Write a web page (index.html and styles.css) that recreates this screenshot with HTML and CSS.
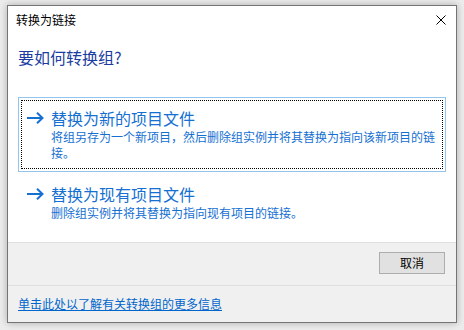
FILE: index.html
```html
<!DOCTYPE html>
<html lang="zh-CN">
<head>
<meta charset="utf-8">
<title>转换为链接</title>
<link rel="stylesheet" href="styles.css">
</head>
<body>
<div class="window">
  <div class="titlebar">
    <span class="title">转换为链接</span>
    <svg class="close" width="10" height="10" viewBox="0 0 10 10"><path d="M0.5 0.5L9.5 9.5M9.5 0.5L0.5 9.5" stroke="#000" stroke-width="1" fill="none"/></svg>
  </div>
  <div class="content">
    <div class="heading">要如何转换组?</div>
    <div class="cmd focused">
      <div class="arrow"><svg width="17" height="12" viewBox="0 0 17 12"><path d="M0 6H15.5M10 0.7L15.5 6L10 11.3" stroke="#1570d2" stroke-width="2" fill="none"/></svg></div>
      <div class="cmd-text">
        <div class="cmd-title">替换为新的项目文件</div>
        <div class="cmd-desc">将组另存为一个新项目，然后删除组实例并将其替换为指向该新项目的链接。</div>
      </div>
    </div>
    <div class="cmd">
      <div class="arrow"><svg width="17" height="12" viewBox="0 0 17 12"><path d="M0 6H15.5M10 0.7L15.5 6L10 11.3" stroke="#1570d2" stroke-width="2" fill="none"/></svg></div>
      <div class="cmd-text">
        <div class="cmd-title">替换为现有项目文件</div>
        <div class="cmd-desc">删除组实例并将其替换为指向现有项目的链接。</div>
      </div>
    </div>
  </div>
  <div class="footer">
    <button class="btn">取消</button>
  </div>
  <div class="bottombar">
    <a class="more" href="#">单击此处以了解有关转换组的更多信息</a>
  </div>
</div>
</body>
</html>
```
FILE: styles.css
```css
html, body {
  margin: 0;
  padding: 0;
}
body {
  background: #ececec;
  font-family: "Noto Sans CJK SC", "Noto Sans", sans-serif;
  width: 464px;
  height: 330px;
  overflow: hidden;
}
.window {
  box-sizing: border-box;
  width: 450px;
  height: 318px;
  margin: 5px 0 0 7px;
  border: 1px solid #757575;
  background: #ffffff;
  box-shadow: 0 0 7px rgba(0, 0, 0, 0.28);
  display: flex;
  flex-direction: column;
}
.titlebar {
  height: 27px;
  display: flex;
  align-items: center;
  justify-content: space-between;
  padding: 0 10px 0 8px;
  font-size: 12px;
  line-height: 16px;
  color: #000;
}
.close {
  display: block;
  margin-top: 1px;
}
.content {
  padding: 0 10px 10px 10px;
}
.heading {
  margin-top: 13px;
  font-size: 16px;
  line-height: 22px;
  color: #1b3ca0;
}
.cmd {
  position: relative;
  margin-top: 1px;
  display: flex;
  align-items: flex-start;
  padding: 9px 8px 10px 8px;
  border: 1px solid transparent;
}
.cmd.focused {
  margin-top: 29px;
  border-color: #92c4ee;
}
.cmd.focused::after {
  content: "";
  position: absolute;
  left: 2px;
  top: 2px;
  right: 2px;
  bottom: 2px;
  border: 1px dotted #000;
}
.arrow {
  width: 17px;
  height: 22px;
  display: flex;
  align-items: center;
  margin-right: 7px;
  flex: none;
}
.arrow svg {
  display: block;
}
.cmd-text {
  flex: 1;
  min-width: 0;
}
.cmd-title {
  font-size: 16px;
  line-height: 22px;
  color: #1570d2;
}
.cmd-desc {
  font-size: 12px;
  line-height: 16px;
  color: #1570d2;
}
.footer {
  border-top: 1px solid #dfdfdf;
  background: #f0f0f0;
  padding: 9px 11px 11px 0;
  display: flex;
  justify-content: flex-end;
}
.btn {
  box-sizing: border-box;
  width: 66px;
  height: 22px;
  margin: 0;
  padding: 0;
  border: 1px solid #adadad;
  background: #e1e1e1;
  font-family: "Noto Sans CJK SC", "Noto Sans", sans-serif;
  font-size: 12px;
  line-height: 16px;
  color: #000;
}
.bottombar {
  flex: 1;
  border-top: 1px solid #dfdfdf;
  background: #f0f0f0;
  display: flex;
  align-items: center;
  padding: 0 10px 0 10px;
}
.more {
  font-size: 12px;
  line-height: 16px;
  color: #0066cc;
  text-decoration: underline;
}
```
